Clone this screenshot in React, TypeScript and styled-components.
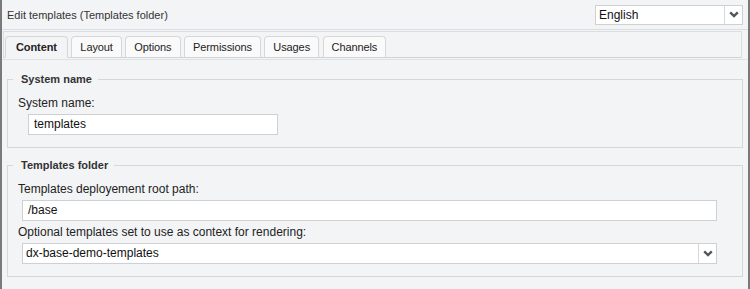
import styled, { createGlobalStyle } from 'styled-components';

const GlobalStyle = createGlobalStyle`
  html, body {
    margin: 0;
    padding: 0;
    background: #f3f4f6;
  }
  body {
    font-family: "Liberation Sans", Arial, sans-serif;
    color: #222;
  }
`;

const tabs = ['Content', 'Layout', 'Options', 'Permissions', 'Usages', 'Channels'];

const Chevron = () => (
  <svg width="10" height="7" viewBox="0 0 10 7">
    <path d="M1.2 1.3 L5 5 L8.8 1.3" fill="none" stroke="#555" strokeWidth="2.4" />
  </svg>
);

export default function App() {
  return (
    <>
      <GlobalStyle />
      <Frame>
        <Header>
          <Title>Edit templates (Templates folder)</Title>
          <Select width={148}>
            <SelectValue>English</SelectValue>
            <SelectArrow>
              <Chevron />
            </SelectArrow>
          </Select>
        </Header>

        <TabNav>
          {tabs.map((t, i) => (
            <Tab key={t} active={i === 0}>
              {t}
            </Tab>
          ))}
        </TabNav>

        <Panel>
          <Fieldset>
            <Legend>System name</Legend>
            <Label>System name:</Label>
            <Input indent={10} width={250}>templates</Input>
          </Fieldset>

          <Fieldset>
            <Legend>Templates folder</Legend>
            <Label>Templates deployement root path:</Label>
            <Input indent={4}>/base</Input>
            <Label>Optional templates set to use as context for rendering:</Label>
            <Select indent={4}>
              <SelectValue>dx-base-demo-templates</SelectValue>
              <SelectArrow>
                <Chevron />
              </SelectArrow>
            </Select>
          </Fieldset>
        </Panel>
      </Frame>
    </>
  );
}

const Frame = styled.div`
  box-sizing: border-box;
  width: 750px;
  height: 289px;
  border-left: 2px solid #7a7a7a;
  border-right: 2px solid #7a7a7a;
  background: #f3f4f6;
  overflow: hidden;
`;

const Header = styled.div`
  height: 29px;
  display: flex;
  align-items: center;
  justify-content: space-between;
  padding: 0 5px 0 5px;
  border-bottom: 1px solid #dcdde0;
`;

const Title = styled.div`
  font-size: 11px;
  color: #333;
`;

const Select = styled.div<{ width?: number; indent?: number }>`
  box-sizing: border-box;
  display: flex;
  height: ${(p) => (p.width ? 20 : 21)}px;
  width: ${(p) => (p.width ? `${p.width}px` : 'auto')};
  margin-top: ${(p) => (p.width ? 0 : 1)}px;
  margin-left: ${(p) => (p.indent ? p.indent + 5 : 0)}px;
  margin-right: ${(p) => (p.width ? 0 : 25)}px;
  background: #fff;
  border: 1px solid #cfd0d2;
`;

const SelectValue = styled.div`
  flex: 1;
  font-size: 12px;
  line-height: 18px;
  padding-left: 3px;
  color: #111;
`;

const SelectArrow = styled.div`
  width: 17px;
  border-left: 1px solid #d6d7d9;
  display: flex;
  align-items: center;
  justify-content: center;
`;

const TabNav = styled.div`
  box-sizing: border-box;
  height: 27px;
  margin: 1px 6px 0 1px;
  padding: 4px 0 0 1px;
  display: flex;
  gap: 3.5px;
  align-items: flex-end;
  border: 1px solid #dcdde0;
  border-bottom-color: #d2d3d6;
`;

const Tab = styled.div<{ active?: boolean }>`
  box-sizing: border-box;
  height: 22px;
  margin-bottom: -1px;
  padding: 0 ${(p) => (p.active ? 10 : 8)}px;
  display: flex;
  align-items: center;
  font-size: 11px;
  letter-spacing: -0.1px;
  font-weight: ${(p) => (p.active ? 700 : 400)};
  color: #222;
  background: ${(p) => (p.active ? '#f3f4f6' : '#fafafa')};
  border: 1px solid #d6d7d9;
  border-bottom-color: ${(p) => (p.active ? '#f3f4f6' : '#d2d3d6')};
  border-radius: 4px 4px 0 0;
`;

const Panel = styled.div`
  border-top: 1px solid #e0e1e3;
  margin-top: 1px;
  padding: 13px 5px 0 5px;
  display: flex;
  flex-direction: column;
  gap: 11px;
`;

const Fieldset = styled.fieldset`
  margin: 0;
  padding: 7px 0 12px 5px;
  border: 1px solid #d6d7d9;
  min-width: 0;
`;

const Legend = styled.legend`
  padding: 0 6px 0 8px;
  font-size: 11px;
  font-weight: 700;
  color: #333;
`;

const Label = styled.div`
  font-size: 12px;
  line-height: 14px;
  color: #222;
  margin: 4px 0 4px 5px;
`;

const Input = styled.div<{ width?: number; indent?: number }>`
  box-sizing: border-box;
  height: 21px;
  width: ${(p) => (p.width ? `${p.width}px` : 'auto')};
  margin-left: ${(p) => (p.indent ?? 0) + 5}px;
  margin-right: ${(p) => (p.width ? 0 : 25)}px;
  background: #fff;
  border: 1px solid #cfd0d2;
  font-size: 12px;
  line-height: 19px;
  padding-left: 5px;
  color: #111;
`;
